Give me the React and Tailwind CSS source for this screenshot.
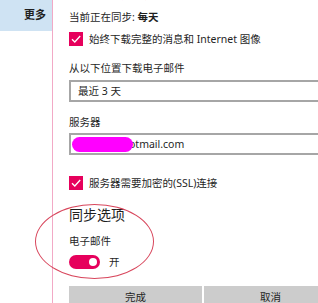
import { useState } from "react";

const font = {
  fontFamily: '"Noto Sans", "Noto Sans CJK SC", sans-serif',
};

const Check = () => (
  <span className="w-[14px] h-[14px] bg-[#e6005c] flex items-center justify-center shrink-0">
    <svg width="12" height="12" viewBox="0 0 12 12" fill="none">
      <path d="M2 6.2 L4.8 9 L10.2 3" stroke="#fff" strokeWidth="1.3" />
    </svg>
  </span>
);

export default function App() {
  const [syncMail, setSyncMail] = useState(true);

  return (
    <div
      className="relative w-[318px] h-[303px] overflow-hidden bg-white text-[#1f1f1f] flex"
      style={font}
    >
      {/* Sidebar */}
      <div className="w-[53px] shrink-0 border-r border-[#f2a9c6]">
        <div className="h-[31px] bg-[#cfe3f3] flex items-center justify-end pr-[6px] text-[11px] font-bold">
          更多
        </div>
      </div>

      {/* Settings pane */}
      <div className="w-[284px] shrink-0 pl-[16px] text-[10.5px] leading-[16px]">
        <div className="h-[16px] mt-[-13px] text-[#555]">根据我的使用情况</div>
        <div className="h-[16px] mt-[6px]">
          当前正在同步: <span className="font-bold">每天</span>
        </div>

        <div className="flex items-center gap-[6px] mt-[7px] h-[14px]">
          <Check />
          <span>始终下载完整的消息和 Internet 图像</span>
        </div>

        <div className="mt-[14px]">从以下位置下载电子邮件</div>
        <div className="mt-[4px] h-[22px] border-2 border-[#a6a6a6] flex items-center pl-[7px]">
          最近 3 天
        </div>

        <div className="mt-[12px]">服务器</div>
        <div className="mt-[3px] h-[22px] border-2 border-[#a6a6a6] flex items-center pl-[1px]">
          <span className="relative z-10 w-[61px] h-[15px] rounded-full bg-[#ff00ff]" />
          <span className="ml-[-4px]">otmail.com</span>
        </div>

        <div className="flex items-center gap-[6px] mt-[21px] h-[14px]">
          <Check />
          <span>服务器需要加密的(SSL)连接</span>
        </div>

        <div className="mt-[15px] h-[20px] text-[14px] leading-[20px]">同步选项</div>
        <div className="mt-[8px]">电子邮件</div>
        <button
          className="mt-[6px] h-[14px] flex items-center gap-[9px]"
          onClick={() => setSyncMail(!syncMail)}
        >
          <span className="w-[31px] h-[14px] rounded-full bg-[#e6005c] flex items-center justify-end pr-[3px]">
            <span className="w-[8px] h-[8px] rounded-full bg-white" />
          </span>
          <span>{syncMail ? "开" : "关"}</span>
        </button>

        <div className="mt-[17px] flex gap-[2px]">
          <div className="w-[141px] h-[22px] bg-[#cccccc] flex items-center justify-center">完成</div>
          <div className="w-[141px] h-[22px] bg-[#cccccc] flex items-center justify-center">取消</div>
        </div>
      </div>

      {/* Annotation ring */}
      <div className="absolute left-[35px] top-[204px] w-[119px] h-[75px] rounded-[50%] border-[1.5px] border-[#d8465c]" />
    </div>
  );
}
